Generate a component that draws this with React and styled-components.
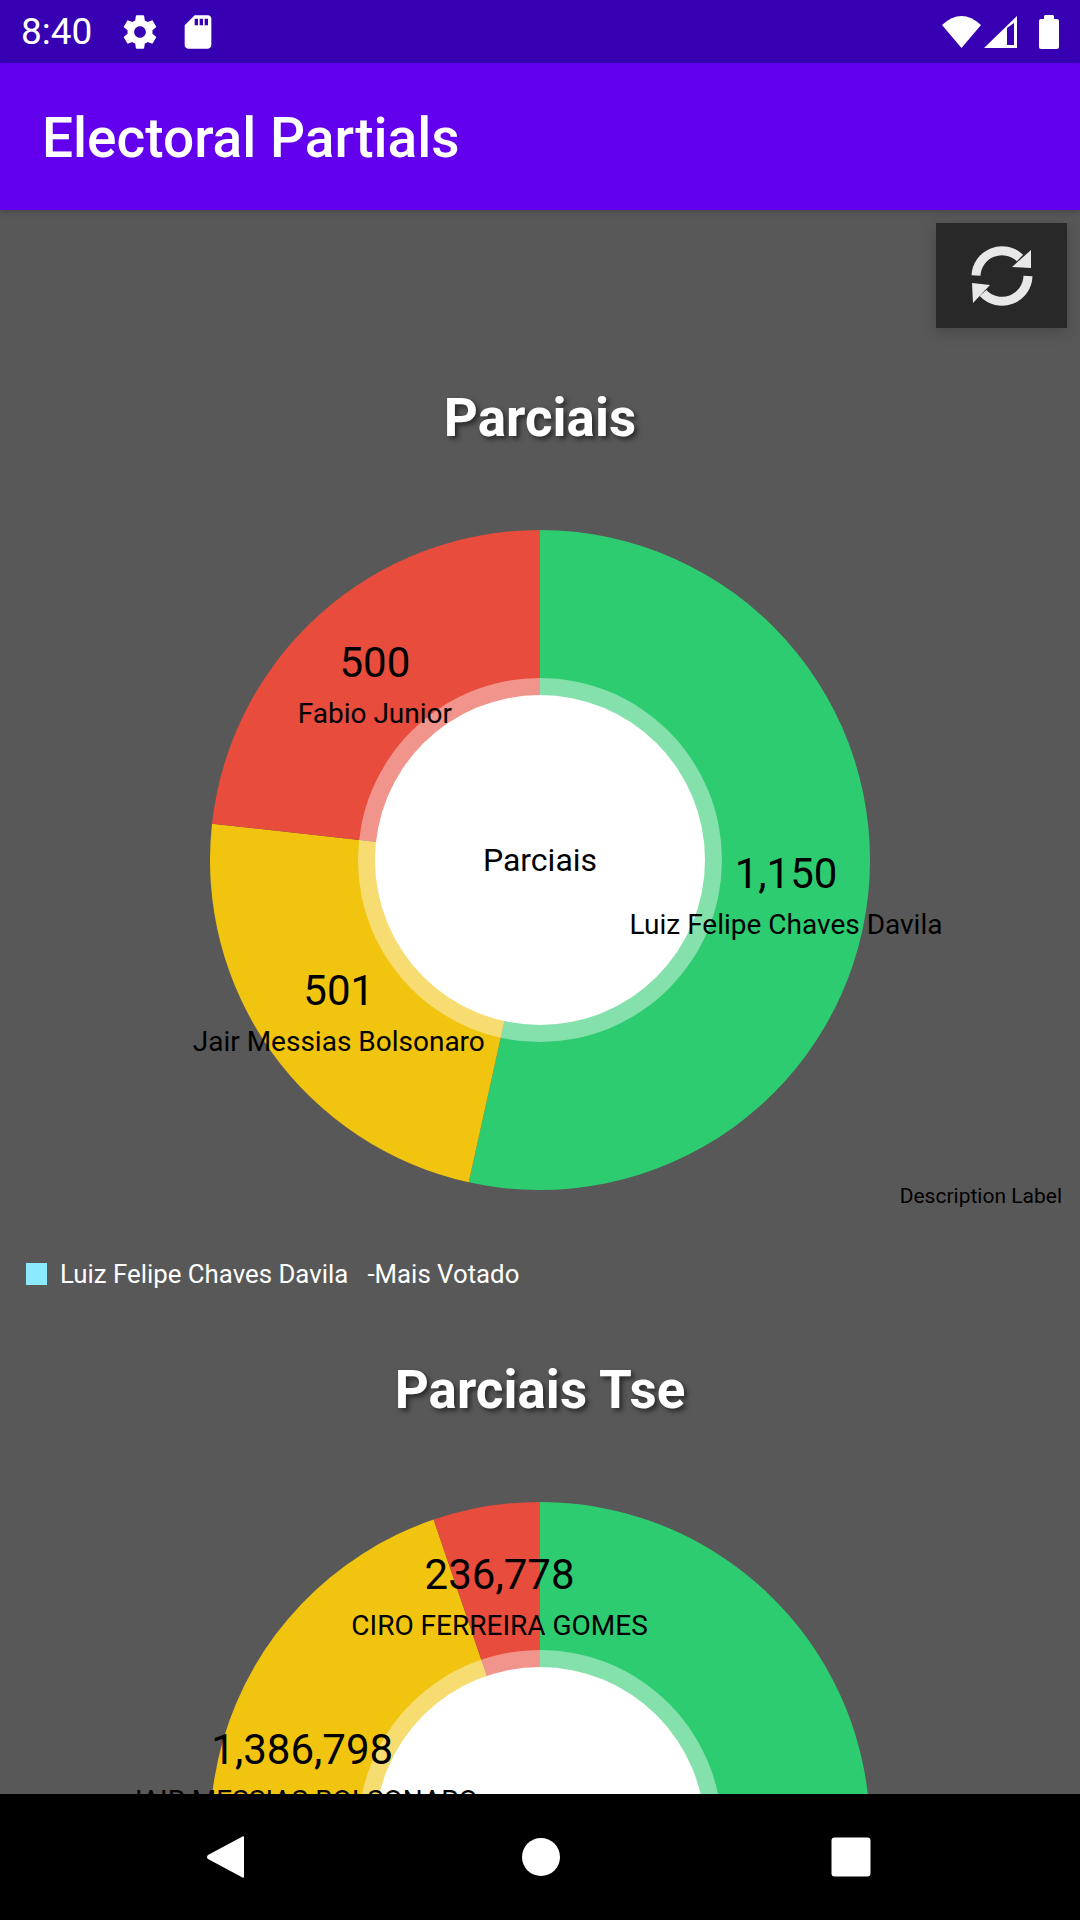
import React from "react"
import styled, { createGlobalStyle } from "styled-components"

const CHART_SIZE = 660
const RADIUS = 330
const LABEL_RADIUS = 247.5

const firstChart = {
    title: "Parciais",
    legend: "Luiz Felipe Chaves Davila   -Mais Votado",
    slices: [
        { value: 1150, name: "Luiz Felipe Chaves Davila", color: "#2ecc71" },
        { value: 501, name: "Jair Messias Bolsonaro", color: "#f1c40f" },
        { value: 500, name: "Fabio Junior", color: "#e74c3c" },
    ],
}

const secondChart = {
    title: "Parciais Tse",
    slices: [
        { value: 2910424, color: "#2ecc71" },
        { value: 1386798, name: "JAIR MESSIAS BOLSONARO", color: "#f1c40f" },
        { value: 236778, name: "CIRO FERREIRA GOMES", color: "#e74c3c" },
    ],
}

const polar = (angle, radius) => {
    const rad = (angle * Math.PI) / 180
    return [RADIUS + radius * Math.sin(rad), RADIUS - radius * Math.cos(rad)]
}

const withAngles = slices => {
    const total = slices.reduce((sum, s) => sum + s.value, 0)
    let start = 0
    return slices.map(s => {
        const sweep = (s.value / total) * 360
        const item = { ...s, start, end: start + sweep, mid: start + sweep / 2 }
        start += sweep
        return item
    })
}

const slicePath = ({ start, end }) => {
    const [x1, y1] = polar(start, RADIUS)
    const [x2, y2] = polar(end, RADIUS)
    const large = end - start > 180 ? 1 : 0
    return `M${RADIUS} ${RADIUS}L${x1} ${y1}A${RADIUS} ${RADIUS} 0 ${large} 1 ${x2} ${y2}Z`
}

const Donut = ({ slices, title }) => {
    const items = withAngles(slices)
    return (
        <ChartArea>
            <DonutBox>
                <svg width={CHART_SIZE} height={CHART_SIZE} viewBox="0 0 660 660">
                    {items.map(s => <path key={s.color} d={slicePath(s)} fill={s.color} />)}
                    <circle cx="330" cy="330" r="182" fill="#fff" fillOpacity="0.41" />
                    <circle cx="330" cy="330" r="165" fill="#fff" />
                </svg>
                <CenterText>{title}</CenterText>
                {items.filter(s => s.name).map(s => {
                    const [x, y] = polar(s.mid, LABEL_RADIUS)
                    return (
                        <SliceLabel key={s.color} style={{ left: x, top: y }}>
                            <SliceValue>{s.value.toLocaleString("en-US")}</SliceValue>
                            <SliceName>{s.name}</SliceName>
                        </SliceLabel>
                    )
                })}
            </DonutBox>
        </ChartArea>
    )
}

const App = () => {
    return (
        <Page>
            <GlobalStyle />
            <StatusBar>
                <StatusLeft>
                    <Clock>8:40</Clock>
                    <svg width="40" height="40" viewBox="0 0 24 24" fill="#fff">
                        <path d="M19.43 12.98c.04-.32.07-.64.07-.98s-.03-.66-.07-.98l2.11-1.65c.19-.15.24-.42.12-.64l-2-3.46c-.12-.22-.39-.3-.61-.22l-2.49 1c-.52-.4-1.08-.73-1.69-.98l-.38-2.65C14.46 2.18 14.25 2 14 2h-4c-.25 0-.46.18-.49.42l-.38 2.65c-.61.25-1.17.59-1.69.98l-2.49-1c-.23-.09-.49 0-.61.22l-2 3.46c-.13.22-.07.49.12.64l2.11 1.65c-.04.32-.07.65-.07.98s.03.66.07.98l-2.11 1.65c-.19.15-.24.42-.12.64l2 3.46c.12.22.39.3.61.22l2.49-1c.52.4 1.08.73 1.69.98l.38 2.65c.03.24.24.42.49.42h4c.25 0 .46-.18.49-.42l.38-2.65c.61-.25 1.17-.59 1.69-.98l2.49 1c.23.09.49 0 .61-.22l2-3.46c.12-.22.07-.49-.12-.64l-2.11-1.65zM12 15.5c-1.93 0-3.5-1.57-3.5-3.5s1.57-3.5 3.5-3.5 3.5 1.57 3.5 3.5-1.57 3.5-3.5 3.5z" />
                    </svg>
                    <svg width="40" height="40" viewBox="0 0 24 24" fill="#fff">
                        <path d="M18 2h-8L4.02 8 4 20c0 1.1.9 2 2 2h12c1.1 0 2-.9 2-2V4c0-1.1-.9-2-2-2zm-6 6h-2V4h2v4zm3 0h-2V4h2v4zm3 0h-2V4h2v4z" />
                    </svg>
                </StatusLeft>
                <StatusRight>
                    <svg width="39" height="32" viewBox="0 0 39 32" fill="#fff">
                        <path d="M19.5 32L0 9Q19.5-9 39 9Z" />
                    </svg>
                    <svg width="33" height="32" viewBox="0 0 33 32" fill="#fff">
                        <path fillRule="evenodd" d="M0 32L33 0V32ZM23 12L30 7V29H23Z" />
                    </svg>
                    <BatteryIcon width="20" height="34" viewBox="0 0 20 34" fill="#fff">
                        <path d="M5 4V1.5C5 .7 5.7 0 6.500 0h7c.8 0 1.500.7 1.500 1.500V4h3c1.100 0 2 .9 2 2v26c0 1.100-.9 2-2 2H2c-1.100 0-2-.9-2-2V6c0-1.100.9-2 2-2Z" />
                    </BatteryIcon>
                </StatusRight>
            </StatusBar>
            <AppBar>Electoral Partials</AppBar>
            <Content>
                <ActionRow>
                    <RefreshButton>
                        <RefreshIcon width="64" height="64" viewBox="0 0 64 62" fill="none">
                            <path d="M6 30.500A26 26 0 0 1 50 13" stroke="#e8e8e8" strokeWidth="9" />
                            <path d="M61 5V23L42 22Z" fill="#e8e8e8" />
                            <path d="M58 31A26 26 0 0 1 13 48" stroke="#e8e8e8" strokeWidth="9" />
                            <path d="M2 38L20 40 3 58Z" fill="#e8e8e8" />
                        </RefreshIcon>
                    </RefreshButton>
                </ActionRow>
                <Section>
                    <ChartTitle>{firstChart.title}</ChartTitle>
                    <Donut slices={firstChart.slices} title={firstChart.title} />
                    <Description>Description Label</Description>
                    <Legend>
                        <LegendSwatch />
                        <LegendText>{firstChart.legend}</LegendText>
                    </Legend>
                </Section>
                <Section $spaced>
                    <ChartTitle>{secondChart.title}</ChartTitle>
                    <Donut slices={secondChart.slices} title={firstChart.title} />
                </Section>
            </Content>
            <NavBar>
                <svg width="40" height="44" viewBox="0 0 40 44" fill="#fff">
                    <path d="M37.500 1.500C38.500.9 39 1.600 39 2.500v39c0 .9-.5 1.600-1.500 1L3 24c-1.300-.9-1.300-3 0-4Z" />
                </svg>
                <svg width="40" height="40" viewBox="0 0 40 40" fill="#fff">
                    <circle cx="20" cy="20" r="19" />
                </svg>
                <svg width="40" height="40" viewBox="0 0 40 40" fill="#fff">
                    <rect x="0.500" y="0.500" width="39" height="39" rx="3" />
                </svg>
            </NavBar>
        </Page>
    )
}

export default App

const GlobalStyle = createGlobalStyle`
    html, body {
        margin: 0;
        padding: 0;
        background: #585858;
    }
    body {
        font-family: Roboto, "Liberation Sans", sans-serif;
    }
`

const Page = styled.div`
    width: 1080px;
    height: 1920px;
    display: flex;
    flex-direction: column;
    overflow: hidden;
`

const StatusBar = styled.div`
    height: 63px;
    flex: none;
    background: #3700b3;
    color: #fff;
    display: flex;
    justify-content: space-between;
    align-items: center;
    padding: 0 21px;
`

const StatusLeft = styled.div`
    display: flex;
    align-items: center;
    gap: 19px;
    svg + svg { margin-left: -1px; }
`

const Clock = styled.span`
    font-size: 37px;
    width: 80px;
`

const StatusRight = styled.div`
    display: flex;
    align-items: center;
    gap: 3px;
`

const BatteryIcon = styled.svg`
    margin-left: 19px;
`

const AppBar = styled.div`
    height: 147px;
    flex: none;
    background: #6200ee;
    color: #fff;
    font-size: 55px;
    font-weight: 500;
    display: flex;
    align-items: center;
    padding: 3px 0 0 42px;
    box-sizing: border-box;
    position: relative;
    z-index: 1;
    box-shadow: 0 2px 6px rgba(0, 0, 0, 0.2);
`

const Content = styled.div`
    flex: 1;
    min-height: 0;
    overflow: hidden;
    background: #585858;
`

const ActionRow = styled.div`
    display: flex;
    justify-content: flex-end;
    padding: 13px 13px 0 0;
`

const RefreshButton = styled.div`
    width: 131px;
    height: 105px;
    background: #282828;
    display: flex;
    align-items: center;
    justify-content: center;
    box-shadow: 0 4px 14px rgba(0, 0, 0, 0.2);
`

const RefreshIcon = styled.svg`
    filter: blur(0.7px);
`

const Section = styled.section`
    padding-top: ${props => props.$spaced ? "74px" : "60px"};
`

const ChartTitle = styled.h2`
    margin: 0 0 82px;
    height: 60px;
    line-height: 60px;
    font-size: 53px;
    font-weight: 700;
    color: #fff;
    text-align: center;
    text-shadow: 3px 3px 5px rgba(0, 0, 0, 0.55);
`

const ChartArea = styled.div`
    display: flex;
    justify-content: center;
`

const DonutBox = styled.div`
    position: relative;
    width: 660px;
    height: 660px;
    svg { display: block; }
`

const CenterText = styled.div`
    position: absolute;
    inset: 0;
    display: flex;
    align-items: center;
    justify-content: center;
    font-size: 32px;
    color: #000;
`

const SliceLabel = styled.div`
    position: absolute;
    transform: translate(-50%, -39px);
    display: flex;
    flex-direction: column;
    align-items: center;
    white-space: nowrap;
    color: #000;
`

const SliceValue = styled.span`
    font-size: 42px;
    line-height: 51px;
`

const SliceName = styled.span`
    font-size: 28px;
    line-height: 52px;
`

const Description = styled.div`
    margin-top: -6px;
    padding-right: 18px;
    text-align: right;
    font-size: 21px;
    line-height: 24px;
    color: #000;
`

const Legend = styled.div`
    display: flex;
    align-items: center;
    gap: 13px;
    margin-top: 54px;
    padding-left: 26px;
    height: 24px;
`

const LegendSwatch = styled.span`
    width: 21px;
    height: 22px;
    background: #8ceaff;
`

const LegendText = styled.span`
    font-size: 25.8px;
    color: #fff;
    white-space: pre;
`

const NavBar = styled.div`
    height: 126px;
    flex: none;
    background: #000;
    display: grid;
    grid-template-columns: 316px 310px 40px;
    align-items: center;
    padding-left: 205px;
    position: relative;
`
